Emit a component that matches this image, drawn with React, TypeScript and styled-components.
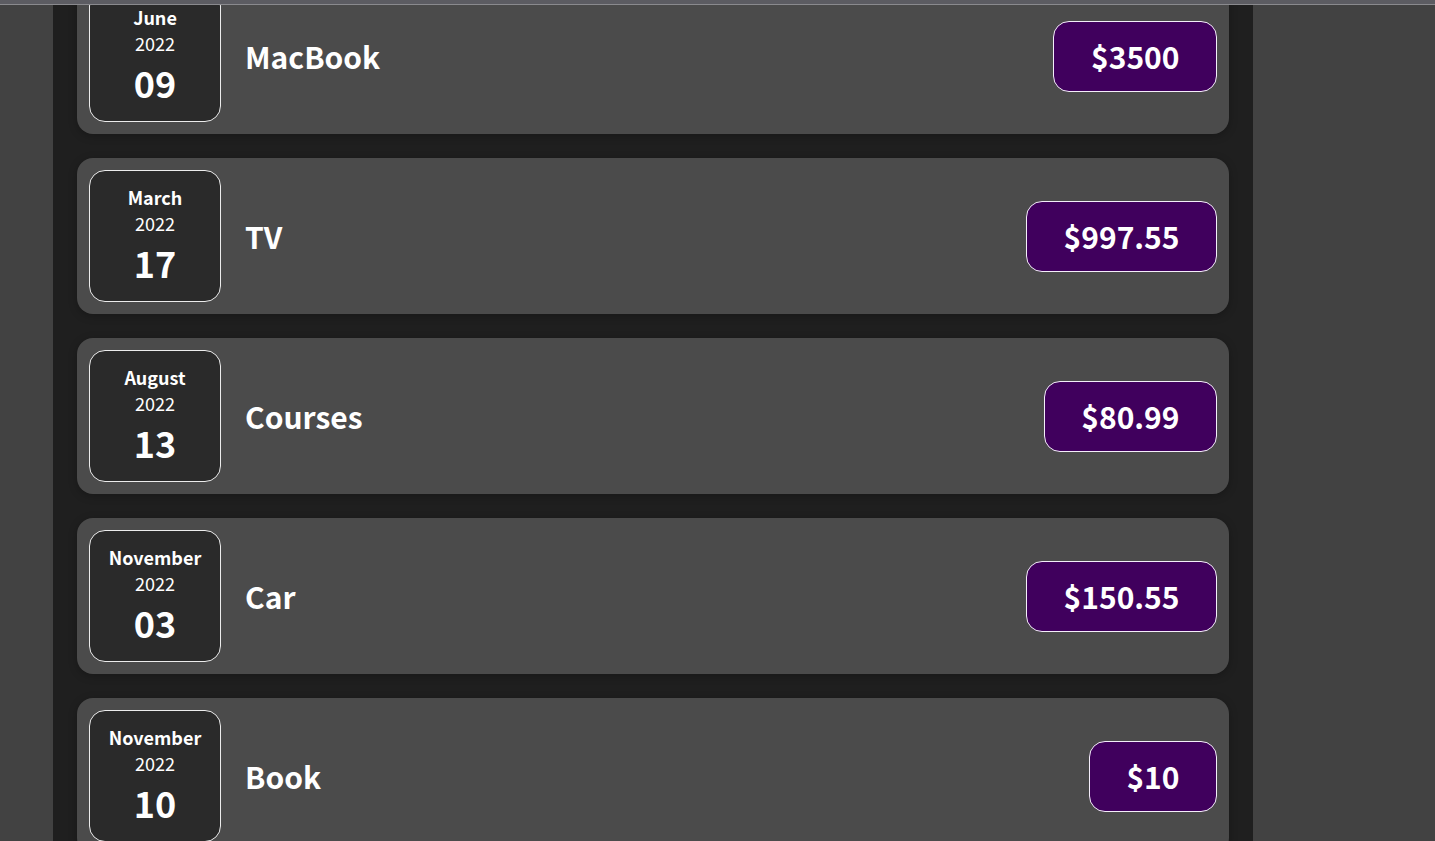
import React, {useLayoutEffect} from 'react';
import styled, {createGlobalStyle} from 'styled-components';

interface Expense {
    id: string,
    title: string,
    amount: number,
    date: Date,
}

const expenses: Expense[] = [
    {id: 'e1', title: 'MacBook', amount: 3500, date: new Date(2022, 5, 9)},
    {id: 'e2', title: 'TV', amount: 997.55, date: new Date(2022, 2, 17)},
    {id: 'e3', title: 'Courses', amount: 80.99, date: new Date(2022, 7, 13)},
    {id: 'e4', title: 'Car', amount: 150.55, date: new Date(2022, 10, 3)},
    {id: 'e5', title: 'Book', amount: 10, date: new Date(2022, 10, 10)},
];

// the page is shown scrolled down, the first card half under the top edge
const SCROLL_TOP = 118;

const ExpenseDate = ({date}: {date: Date}) => {
    const month = date.toLocaleString('en-US', {month: 'long'});
    const day = date.toLocaleString('en-US', {day: '2-digit'});
    const year = date.getFullYear();

    return (
        <DateBox>
            <Month>{month}</Month>
            <Year>{year}</Year>
            <Day>{day}</Day>
        </DateBox>
    );
};

const ExpenseItem = ({expense}: {expense: Expense}) => (
    <Item>
        <ExpenseDate date={expense.date}/>
        <Description>
            <Title>{expense.title}</Title>
            <Price>${expense.amount}</Price>
        </Description>
    </Item>
);

const App = () => {
    useLayoutEffect(() => {
        window.scrollTo(0, SCROLL_TOP);
    }, []);

    return (
        <>
            <GlobalStyle/>
            <TopBar/>
            <Page>
                <Expenses>
                    <List>
                        {expenses.map((expense) => (
                            <li key={expense.id}>
                                <ExpenseItem expense={expense}/>
                            </li>
                        ))}
                    </List>
                </Expenses>
            </Page>
        </>
    );
};

const GlobalStyle = createGlobalStyle`
    html, body {
        margin: 0;
        padding: 0;
        background: #424242;
        font-family: "Noto Sans CJK JP", "Noto Sans", sans-serif;
    }
    * {
        box-sizing: border-box;
    }
`;

const TopBar = styled.div`
    position: fixed;
    top: 0;
    left: 0;
    right: 0;
    height: 5px;
    background: #5c5c62;
    border-bottom: 1px solid #8a8a8e;
    z-index: 10;
`;

const Page = styled.div`
    padding: 48px 0 48px 53px;
`;

const Expenses = styled.div`
    width: 1200px;
    padding: 24px;
    background: #1f1f1f;
    min-height: 1200px;
`;

const List = styled.ul`
    list-style: none;
    margin: 0;
    padding: 0;
`;

const Item = styled.div`
    display: flex;
    align-items: center;
    padding: 12px;
    margin: 24px 0;
    background: #4b4b4b;
    border-radius: 16px;
    box-shadow: 0 2px 8px rgba(0, 0, 0, 0.25);
`;

const DateBox = styled.div`
    display: flex;
    flex-direction: column;
    align-items: center;
    justify-content: center;
    width: 132px;
    height: 132px;
    flex-shrink: 0;
    border: 1px solid #ececec;
    border-radius: 16px;
    background: #2a2a2a;
    color: #fff;
`;

const Month = styled.div`
    font-size: 18px;
    font-weight: 700;
    line-height: 26px;
`;

const Year = styled.div`
    font-size: 18px;
    line-height: 26px;
`;

const Day = styled.div`
    font-size: 36px;
    font-weight: 700;
    line-height: 52px;
`;

const Description = styled.div`
    display: flex;
    align-items: center;
    flex: 1;
`;

const Title = styled.h2`
    flex: 1;
    margin: 0 24px;
    font-size: 30px;
    font-weight: 700;
    color: #fff;
`;

const Price = styled.div`
    padding: 12px 36.5px;
    font-size: 30px;
    font-weight: 700;
    line-height: 45px;
    color: #fff;
    background: #40005d;
    border: 1px solid #f4eefa;
    border-radius: 16px;
`;

export default App;
